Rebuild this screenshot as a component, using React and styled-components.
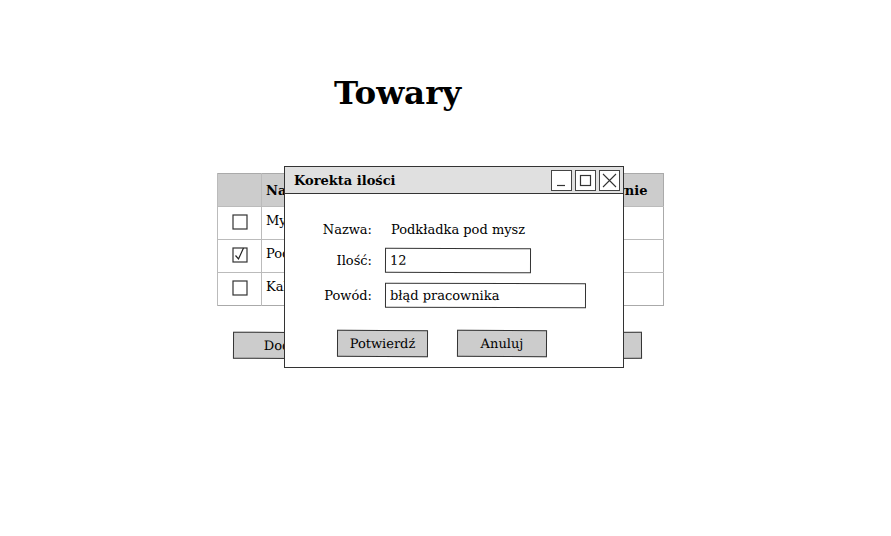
import React from "react"
import styled, { createGlobalStyle } from "styled-components"

const GlobalStyle = createGlobalStyle`
  html, body {
    margin: 0;
    padding: 0;
    background: #fff;
  }
  body {
    font-family: "DejaVu Serif", serif;
    color: #000;
  }
`

const Page = styled.div`
  position: relative;
  width: 891px;
  height: 536px;
  overflow: hidden;
  padding-top: 71px;
  box-sizing: border-box;
`

const Title = styled.h1`
  margin: 0 0 0 334px;
  font-size: 32.5px;
  font-weight: bold;
  line-height: 44px;
`

const Table = styled.table`
  margin: 58px 0 0 217px;
  width: 447px;
  border-collapse: collapse;
  font-size: 13px;
  border: 1px solid #aaa;
`

const HeadCell = styled.th`
  background: #cccccc;
  height: 32px;
  padding: 0 4px;
  text-align: left;
  font-weight: bold;
  border-left: 1px solid #bbb;
  width: ${p => p.$w || "auto"};
`

const Cell = styled.td`
  height: 26px;
  padding: 6px 4px 0;
  border-top: 1px solid #bbb;
  border-left: 1px solid #bbb;
  text-align: ${p => (p.$center ? "center" : "left")};
  vertical-align: top;
  line-height: 15px;
`

const Box = styled.svg`
  display: block;
  margin: 1px auto 0;
`

const ActionRow = styled.div`
  display: flex;
  justify-content: space-between;
  width: 409px;
  margin: 26px 0 0 233px;
`

const Button = styled.button`
  width: ${p => p.$w || "90px"};
  height: 27px;
  background: #cccccc;
  border: 1px solid #333;
  font-family: "DejaVu Serif", serif;
  font-size: 13px;
  color: #000;
  padding: 0;
  transform: rotate(${p => p.$tilt || "0deg"});
`

const Dialog = styled.div`
  position: absolute;
  left: 284px;
  top: 166px;
  width: 340px;
  height: 202px;
  box-sizing: border-box;
  border: 1px solid #333;
  background: #fff;
  display: flex;
  flex-direction: column;
`

const TitleBar = styled.div`
  height: 26px;
  background: #e0e0e0;
  border-bottom: 1px solid #333;
  display: flex;
  align-items: center;
  justify-content: space-between;
  padding: 0 3px 0 9px;
`

const TitleText = styled.span`
  font-size: 13px;
  font-weight: bold;
`

const WinButtons = styled.div`
  display: flex;
  gap: 3px;
`

const WinButton = styled.div`
  width: 19px;
  height: 19px;
  border: 1px solid #444;
  background: #fff;
  display: flex;
  align-items: center;
  justify-content: center;
`

const Form = styled.div`
  display: grid;
  grid-template-columns: 87px 1fr;
  column-gap: 13px;
  row-gap: 10px;
  align-items: center;
  padding-top: 28px;
  font-size: 13px;
`

const Label = styled.div`
  text-align: right;
  line-height: 16px;
`

const Value = styled.div`
  padding-left: 6px;
  line-height: 16px;
`

const Input = styled.div`
  width: ${p => p.$w};
  height: 25px;
  box-sizing: border-box;
  border: 1px solid #333;
  padding: 0 4px;
  line-height: 23px;
  transform: rotate(${p => p.$tilt || "0deg"});
`

const DialogActions = styled.div`
  display: flex;
  gap: 29px;
  padding: 22px 0 0 52px;
`

const CheckBox = ({ checked }) => (
  <Box width="16" height="16" viewBox="0 0 16 16">
    <rect x="1" y="1" width="14" height="14" fill="#fff" stroke="#333" strokeWidth="1.2" />
    {checked && <path d="M3.5 8.5 L6.5 12 L11.5 1" fill="none" stroke="#222" strokeWidth="1.2" />}
  </Box>
)

const rows = [
  { name: "Mysz", qty: "25", checked: false },
  { name: "Podkładka pod mysz", qty: "12", checked: true },
  { name: "Kalkulator", qty: "7", checked: false },
]

export default function App() {
  return (
    <Page>
      <GlobalStyle />
      <Title>Towary</Title>
      <Table>
        <thead>
          <tr>
            <HeadCell $w="35px"></HeadCell>
            <HeadCell>Nazwa</HeadCell>
            <HeadCell $w="108px">W magazynie</HeadCell>
          </tr>
        </thead>
        <tbody>
          {rows.map(r => (
            <tr key={r.name}>
              <Cell $center>
                <CheckBox checked={r.checked} />
              </Cell>
              <Cell>{r.name}</Cell>
              <Cell>{r.qty}</Cell>
            </tr>
          ))}
        </tbody>
      </Table>
      <ActionRow>
        <Button $w="100px" $tilt="0.3deg">Dodaj</Button>
        <Button $w="100px">Usuń</Button>
        <Button $w="110px" $tilt="-0.3deg">Korekta</Button>
      </ActionRow>

      <Dialog>
        <TitleBar>
          <TitleText>Korekta ilości</TitleText>
          <WinButtons>
            <WinButton>
              <svg width="13" height="13" viewBox="0 0 13 13">
                <path d="M2 11.5 H10" stroke="#333" strokeWidth="1.2" />
              </svg>
            </WinButton>
            <WinButton>
              <svg width="13" height="13" viewBox="0 0 13 13">
                <rect x="1.5" y="1.5" width="10" height="10" fill="none" stroke="#333" strokeWidth="1.2" />
              </svg>
            </WinButton>
            <WinButton>
              <svg width="15" height="15" viewBox="0 0 15 15">
                <path d="M1 1 L14 14 M14 1 L1 14" stroke="#333" strokeWidth="1.1" />
              </svg>
            </WinButton>
          </WinButtons>
        </TitleBar>
        <Form>
          <Label>Nazwa:</Label>
          <Value>Podkładka pod mysz</Value>
          <Label>Ilość:</Label>
          <Input $w="146px" $tilt="0.2deg">12</Input>
          <Label>Powód:</Label>
          <Input $w="201px" $tilt="0.15deg">błąd pracownika</Input>
        </Form>
        <DialogActions>
          <Button $w="91px" $tilt="0.2deg">Potwierdź</Button>
          <Button $w="90px" $tilt="0.3deg">Anuluj</Button>
        </DialogActions>
      </Dialog>
    </Page>
  )
}
